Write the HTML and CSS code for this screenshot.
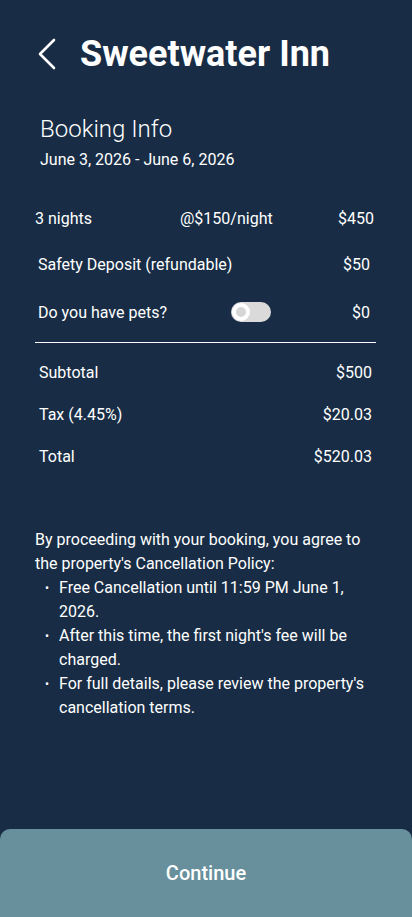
FILE: index.html
```html
<!DOCTYPE html>
<html>

<head>
  <meta charset="utf-8" />
  <meta name="viewport" content="width=device-width, initial-scale=1">
  <title>Sweetwater Inn - Booking Info</title>
  <link rel="stylesheet" href="styles.css">
</head>

<body>
  <main class="page">
    <header class="top">
      <button type="button" class="back" aria-label="Back">
        <svg width="20" height="32" viewBox="0 0 20 32">
          <path d="M17 2 L3 16 L17 30" fill="none" stroke="#fff" stroke-width="2.6" stroke-linecap="round" stroke-linejoin="round" />
        </svg>
      </button>
      <h1>Sweetwater Inn</h1>
    </header>

    <section class="info">
      <h2>Booking Info</h2>
      <p class="dates">June 3, 2026 - June 6, 2026</p>
    </section>

    <section class="lines">
      <div class="row row-nights">
        <span class="label">3 nights</span>
        <span class="rate">@$150/night</span>
        <span>$450</span>
      </div>
      <div class="row">
        <span>Safety Deposit (refundable)</span>
        <span>$50</span>
      </div>
      <div class="row row-pets">
        <span class="label">Do you have pets?</span>
        <input type="checkbox" class="switch" id="pets">
        <span>$0</span>
      </div>
    </section>

    <hr class="divider">

    <section class="totals">
      <div class="row">
        <span>Subtotal</span>
        <span>$500</span>
      </div>
      <div class="row">
        <span>Tax (4.45%)</span>
        <span>$20.03</span>
      </div>
      <div class="row">
        <span>Total</span>
        <span>$520.03</span>
      </div>
    </section>

    <section class="policy">
      <p>By proceeding with your booking, you agree to the property's Cancellation Policy:</p>
      <ul>
        <li>Free Cancellation until 11:59 PM June 1, 2026.</li>
        <li>After this time, the first night's fee will be charged.</li>
        <li>For full details, please review the property's cancellation terms.</li>
      </ul>
    </section>

    <button type="button" class="continue">Continue</button>
  </main>
</body>

</html>
```

FILE: styles.css
```css
* { box-sizing: border-box; margin: 0; padding: 0; }
html, body {
  background: #182d45;
}
body {
  font-family: Roboto, "Noto Sans", sans-serif;
  color: #fff;
}
.page {
  display: flex;
  flex-direction: column;
  min-height: 917px;
}
.top {
  display: flex;
  align-items: center;
  padding: 28px 0 0 37px;
  height: 80px;
}
.back {
  display: flex;
  background: none;
  border: none;
  width: 20px;
  height: 32px;
  margin-right: 23px;
}
h1 {
  font-size: 36px;
  font-weight: 700;
  line-height: 52px;
}
.info {
  padding: 34px 40px 0;
}
h2 {
  font-size: 24px;
  font-weight: 300;
  line-height: 30px;
}
.dates {
  font-size: 16px;
  line-height: 20px;
  margin-top: 6px;
}
.lines {
  margin-top: 25px;
}
.row {
  display: flex;
  align-items: center;
  justify-content: space-between;
  font-size: 16px;
  height: 46px;
  padding: 0 42px 0 38px;
}
.row-nights {
  padding: 0 38px 0 35px;
}
.row-nights .label {
  width: 145px;
}
.row-nights .rate {
  margin-right: auto;
}
.row-pets {
  height: 49px;
  padding-top: 1px;
}
.row-pets .label {
  width: 193px;
}
.switch {
  -webkit-appearance: none;
  appearance: none;
  position: relative;
  width: 40px;
  height: 20px;
  border-radius: 10px;
  background: #dadada;
  margin-right: auto;
  outline: none;
}
.switch::before {
  content: "";
  position: absolute;
  left: 1px;
  top: 1px;
  width: 10px;
  height: 10px;
  border-radius: 50%;
  background: #d6d6d6;
  border: 4px solid #fff;
}
.divider {
  border: none;
  border-top: 1px solid #fff;
  margin: 6px 36px 0 35px;
}
.totals {
  margin-top: 8px;
}
.totals .row {
  height: 42px;
  padding: 0 40px 0 39px;
}
.policy {
  margin-top: 51px;
  padding: 0 35px;
  font-size: 16px;
  line-height: 24px;
}
.policy ul {
  list-style: none;
  padding-left: 24px;
}
.policy li {
  position: relative;
}
.policy li::before {
  content: "•";
  position: absolute;
  left: -14px;
  font-size: 12px;
}
.continue {
  margin-top: auto;
  height: 88px;
  width: 100%;
  border: none;
  border-radius: 10px 10px 0 0;
  background: #678f9c;
  color: #fff;
  font: 500 20px Roboto, "Noto Sans", sans-serif;
  padding-bottom: 0;
}
```
